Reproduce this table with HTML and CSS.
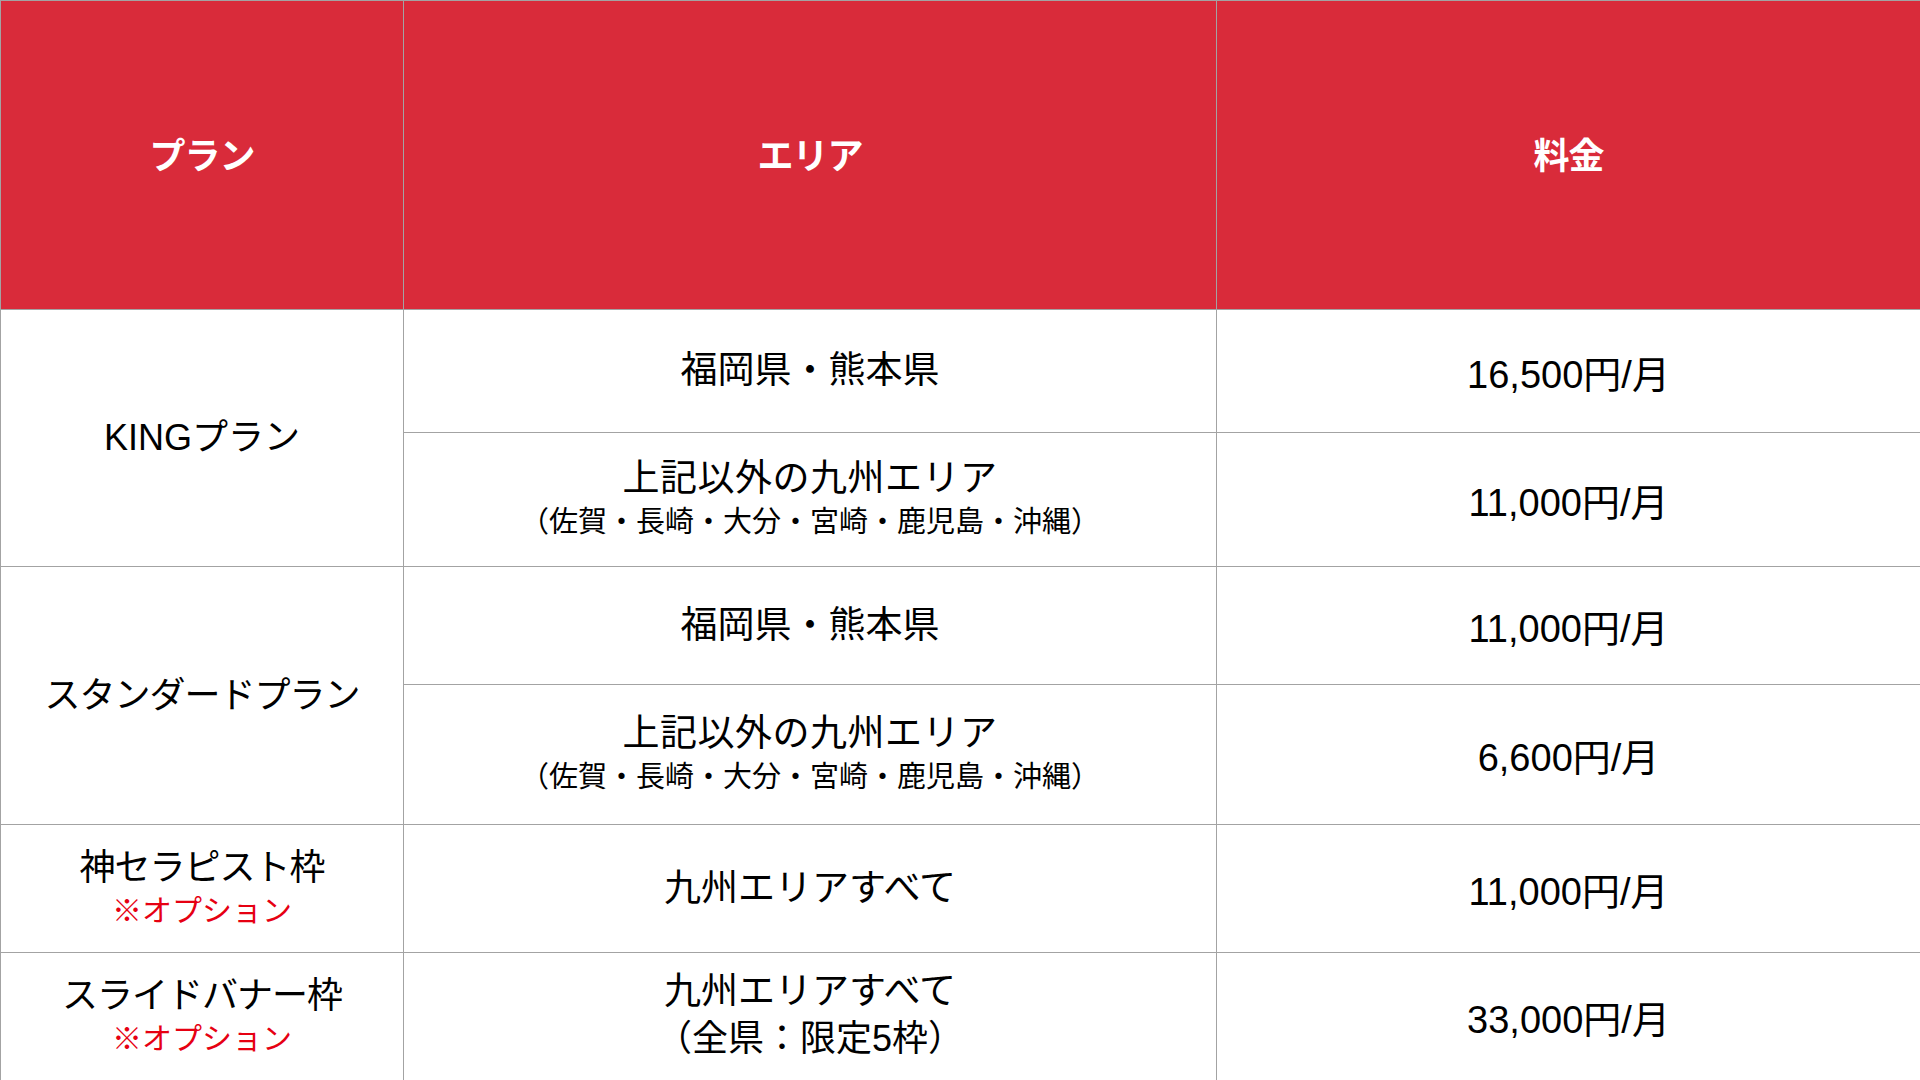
FILE: index.html
```html
<!DOCTYPE html>
<html lang="ja">
<head>
<meta charset="utf-8">
<title>料金プラン</title>
<link rel="stylesheet" href="styles.css">
</head>
<body>
<table class="price-table">
  <colgroup>
    <col class="col-plan">
    <col class="col-area">
    <col class="col-fee">
  </colgroup>
  <thead>
    <tr class="row-head">
      <th>プラン</th>
      <th>エリア</th>
      <th>料金</th>
    </tr>
  </thead>
  <tbody>
    <tr class="row-a">
      <td rowspan="2" class="plan plan-king">KINGプラン</td>
      <td class="area">福岡県・熊本県</td>
      <td class="fee">16,500円/月</td>
    </tr>
    <tr class="row-b">
      <td class="area"><span class="main">上記以外の九州エリア</span><span class="sub">（佐賀・長崎・大分・宮崎・鹿児島・沖縄）</span></td>
      <td class="fee">11,000円/月</td>
    </tr>
    <tr class="row-c">
      <td rowspan="2" class="plan">スタンダードプラン</td>
      <td class="area">福岡県・熊本県</td>
      <td class="fee">11,000円/月</td>
    </tr>
    <tr class="row-d">
      <td class="area"><span class="main">上記以外の九州エリア</span><span class="sub">（佐賀・長崎・大分・宮崎・鹿児島・沖縄）</span></td>
      <td class="fee">6,600円/月</td>
    </tr>
    <tr class="row-e">
      <td class="plan">神セラピスト枠<span class="opt">※オプション</span></td>
      <td class="area">九州エリアすべて</td>
      <td class="fee">11,000円/月</td>
    </tr>
    <tr class="row-f">
      <td class="plan">スライドバナー枠<span class="opt">※オプション</span></td>
      <td class="area">九州エリアすべて<span class="sub2">（全県：限定5枠）</span></td>
      <td class="fee">33,000円/月</td>
    </tr>
  </tbody>
</table>
</body>
</html>
```

FILE: styles.css
```css
html, body {
  margin: 0;
  padding: 0;
  background: #ffffff;
}
body {
  width: 1920px;
  height: 1080px;
  overflow: hidden;
  font-family: "Liberation Sans", "Noto Sans CJK JP", sans-serif;
  color: #000000;
}
.price-table {
  width: 1920px;
  border-collapse: collapse;
  table-layout: fixed;
}
.col-plan { width: 403px; }
.col-area { width: 813px; }
.col-fee { width: 704px; }

.price-table th,
.price-table td {
  border: 1px solid #a3a3a3;
  padding: 0;
  text-align: center;
  vertical-align: middle;
  font-weight: normal;
}
.price-table th {
  background: #d92b3a;
  color: #ffffff;
  font-weight: bold;
  font-size: 36px;
  letter-spacing: -1px;
  padding-bottom: 4px;
}
.row-head { height: 309px; }
.row-a { height: 123px; }
.row-b { height: 134px; }
.row-c { height: 118px; }
.row-d { height: 140px; }
.row-e { height: 128px; }
.row-f { height: 128px; }

.plan {
  font-size: 36px;
  line-height: 44px;
  letter-spacing: -1px;
}
.plan-king {
  letter-spacing: 0;
}
.area {
  font-size: 37px;
  line-height: 44px;
}
.main {
  display: block;
  letter-spacing: 0.5px;
}
.fee {
  font-size: 38px;
  padding-bottom: 10px;
}
.sub {
  display: block;
  font-size: 29px;
  line-height: 42px;
}
.sub2 {
  display: block;
  font-size: 36px;
  line-height: 50px;
}
.opt {
  display: block;
  color: #e60012;
  font-size: 30px;
  line-height: 42px;
  letter-spacing: 0;
}
```
